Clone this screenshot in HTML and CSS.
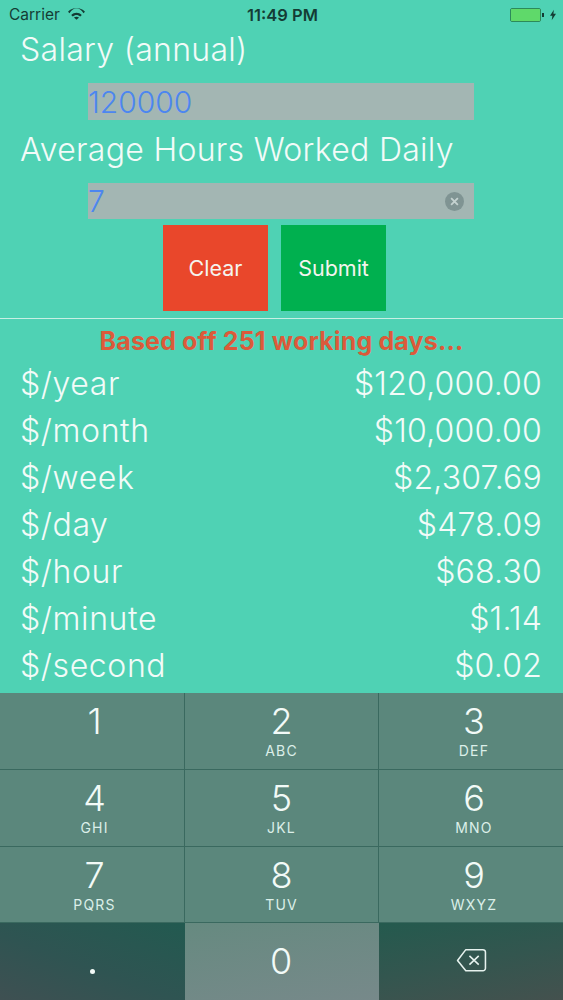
FILE: index.html
```html
<!DOCTYPE html>
<html lang="en">
<head>
<meta charset="utf-8">
<title>Salary</title>
<link rel="stylesheet" href="styles.css">
</head>
<body>
<div class="screen">
  <header class="status">
    <div class="status-left">
      <span>Carrier</span>
      <svg class="wifi" viewBox="0 0 18 13" width="17" height="13"><path d="M0 4.600C5-.6 13-.6 18 4.600l-1.600 1.700C12-.9 6-.9 1.600 6.300z"/><path d="M3.400 8c3.200-3 8-3 11.200 0L13 9.700c-2.400-2.200-5.600-2.200-8 0z"/><path d="M6.300 10.800c1.600-1.300 3.800-1.300 5.400 0L9 13z"/></svg>
    </div>
    <div class="status-time">11:49 PM</div>
    <div class="status-right">
      <span class="battery"><span class="battery-fill"></span></span>
      <span class="battery-tip"></span>
      <svg class="bolt" viewBox="0 0 7 12" width="6" height="12"><path d="M4.500 0 0 7h2.800L2 12l5-7.500H4z"/></svg>
    </div>
  </header>

  <main class="form">
    <div class="label">Salary (annual)</div>
    <div class="field"><span class="field-text">120000</span></div>
    <div class="label label-second">Average Hours Worked Daily</div>
    <div class="field field-second">
      <span class="field-text">7</span>
      <svg class="clear-icon" viewBox="0 0 18 18" width="19" height="19"><circle cx="9" cy="9" r="9" fill="#7f9493"/><path d="M5.800 5.800l6.400 6.400M12.200 5.800l-6.400 6.400" stroke="#c4d2d0" stroke-width="1.700" fill="none"/></svg>
    </div>
    <div class="actions">
      <button class="btn btn-clear">Clear</button>
      <button class="btn btn-submit">Submit</button>
    </div>
  </main>

  <div class="divider"></div>
  <div class="note">Based off 251 working days...</div>

  <section class="results">
    <div class="row"><span class="row-name">$/year</span><span class="row-value">$120,000.00</span></div>
    <div class="row"><span class="row-name">$/month</span><span class="row-value">$10,000.00</span></div>
    <div class="row"><span class="row-name">$/week</span><span class="row-value">$2,307.69</span></div>
    <div class="row"><span class="row-name">$/day</span><span class="row-value">$478.09</span></div>
    <div class="row"><span class="row-name">$/hour</span><span class="row-value">$68.30</span></div>
    <div class="row"><span class="row-name">$/minute</span><span class="row-value">$1.14</span></div>
    <div class="row"><span class="row-name">$/second</span><span class="row-value">$0.02</span></div>
  </section>

  <section class="keyboard">
    <div class="key key-first"><span class="num">1</span></div>
    <div class="key"><span class="num">2</span><span class="sub">ABC</span></div>
    <div class="key key-last"><span class="num">3</span><span class="sub">DEF</span></div>
    <div class="key key-first"><span class="num">4</span><span class="sub">GHI</span></div>
    <div class="key"><span class="num">5</span><span class="sub">JKL</span></div>
    <div class="key key-last"><span class="num">6</span><span class="sub">MNO</span></div>
    <div class="key key-first"><span class="num">7</span><span class="sub">PQRS</span></div>
    <div class="key"><span class="num">8</span><span class="sub">TUV</span></div>
    <div class="key key-last"><span class="num">9</span><span class="sub">WXYZ</span></div>
    <div class="key key-dark key-left"><span class="dot"></span></div>
    <div class="key key-zero"><span class="num">0</span></div>
    <div class="key key-dark key-right">
      <svg viewBox="0 0 30 24" width="31" height="25"><path d="M9.500 1.500H26a2.500 2.500 0 0 1 2.500 2.500v15.500a2.500 2.500 0 0 1-2.500 2.500H9.500L1.500 12z" fill="none" stroke="#e6f2ee" stroke-width="1.500" stroke-linejoin="round"/><path d="M13 7.500l9 8.500M22 7.500l-9 8.500" stroke="#e6f2ee" stroke-width="1.500" fill="none"/></svg>
    </div>
  </section>
</div>
</body>
</html>
```
FILE: styles.css
```css
* { box-sizing: border-box; }
html, body { margin: 0; padding: 0; }
body { width: 563px; height: 1000px; overflow: hidden; font-family: Inter, "Liberation Sans", sans-serif; }
.screen { width: 563px; height: 1000px; display: flex; flex-direction: column; background: #4fd2b4; color: #f2fbf8; }

.status { height: 29px; flex: none; padding: 0 7px 0 9px; display: grid; grid-template-columns: 1fr auto 1fr; align-items: center; color: #143c34; font-size: 15.500px; }
.status-left { display: flex; align-items: center; gap: 8px; }
.wifi { fill: #143c34; margin-top: -3px; }
.status-time { font-weight: 600; font-size: 16.500px; }
.status-right { display: flex; align-items: center; justify-content: flex-end; }
.battery { width: 31px; height: 14px; border: 1px solid #2c8a5a; border-radius: 2px; display: block; }
.battery-fill { display: block; height: 100%; background: #5fd96a; border-radius: 1px; }
.battery-tip { width: 2px; height: 4px; background: #143c34; margin: 0 6px 0 1px; }
.bolt { fill: #143c34; }

.form { flex: none; display: flex; flex-direction: column; }
.label { height: 42px; padding-left: 20px; font-size: 32px; font-weight: 300; line-height: 42px; letter-spacing: .3px; white-space: nowrap; }
.label-second { margin-top: 9px; }
.field { margin: 12px 0 0 88px; width: 386px; height: 37px; background: #a3b6b3; display: flex; align-items: center; justify-content: space-between; color: #4c86f0; font-size: 30px; font-weight: 300; padding-right: 10px; }
.field-second { margin-top: 12px; height: 36px; }
.actions { margin: 6px 0 0 163px; display: flex; gap: 13px; }
.btn { width: 105px; height: 86px; border: 0; padding: 0; color: #f4f4ee; font: 400 21.500px Inter, "Liberation Sans", sans-serif; }
.btn-clear { background: #e9472b; }
.btn-submit { background: #00b04f; }

.divider { flex: none; margin-top: 7px; height: 1px; background: #c8efe4; }
.note { flex: none; height: 41px; line-height: 44px; text-align: center; color: #dc5a3a; font-size: 25px; font-weight: 700; letter-spacing: .15px; white-space: nowrap; }

.results { flex: none; padding: 0 21px; }
.row { height: 47px; line-height: 47px; display: flex; justify-content: space-between; font-size: 32px; font-weight: 300; white-space: nowrap; }
.row-name { letter-spacing: .6px; margin-left: -1px; }
.row-value { letter-spacing: .2px; }

.keyboard { position: absolute; left: 0; top: 693px; width: 563px; height: 307px; display: grid; grid-template-columns: 185px 194px 184px; grid-template-rows: 77px 77px 76px 77px; background: #5b877c; }
.key { display: flex; flex-direction: column; align-items: center; border-right: 1px solid #3a695f; border-bottom: 1px solid #3a695f; padding-top: 6px; }
.key-first { padding-left: 5px; }
.key-last { border-right: 0; padding-left: 6px; }
.num { font-size: 36px; font-weight: 300; line-height: 44px; color: #f2faf7; }
.sub { font-size: 14px; letter-spacing: 1.200px; line-height: 16px; color: #dcefe9; }
.key-dark, .key-zero { border: 0; }
.key-left { background: linear-gradient(200deg, #225a50 0%, #2f5452 55%, #3f5052 100%); justify-content: center; padding: 20px 0 0 0; }
.key-right { background: linear-gradient(170deg, #245a4e 0%, #33564f 50%, #44514e 100%); justify-content: center; padding: 0 0 2px 0; }
.key-zero { background: linear-gradient(170deg, #668a80 0%, #77898a 100%); padding-top: 16px; padding-right: 2px; }
.dot { width: 5px; height: 5px; border-radius: 50%; background: #f2faf7; }
```
